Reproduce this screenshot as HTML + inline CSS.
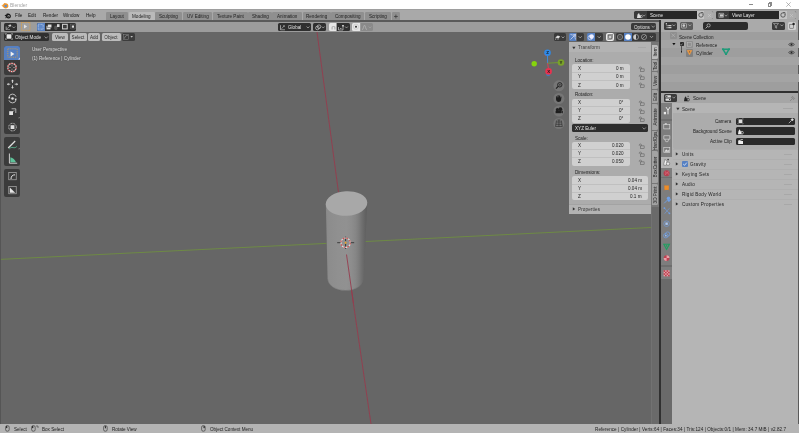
<!DOCTYPE html>
<html><head><meta charset="utf-8">
<style>
*{margin:0;padding:0;box-sizing:border-box}
html,body{width:799px;height:433px;overflow:hidden;background:#666}
body{position:relative;font-family:"Liberation Sans",sans-serif;font-size:4.6px;line-height:1;color:#1a1a1a}
.a{position:absolute}
.t{position:absolute;white-space:nowrap;line-height:1;will-change:transform}
.dk{background:#2f2f2f;border-radius:1.5px}
.lt{background:#bcbcbc;border-radius:1.5px}
</style></head><body>
<!-- title bar -->
<div class="a" style="left:0;top:0;width:799px;height:9.3px;background:#fff"></div>
<div class="a" style="left:0;top:9.3px;width:799px;height:10.7px;background:#a9a9a9"></div>
<div class="a" style="left:0;top:9.3px;width:799px;height:1px;background:#9e9e9e"></div>
<div class="a" style="left:0;top:20px;width:799px;height:1.5px;background:#5a5a5a"></div>
<div class="a" style="left:0;top:21.5px;width:659px;height:10px;background:#9c9c9c"></div>
<!-- viewport -->
<div class="a" style="left:0;top:31.5px;width:659px;height:392px;background:#666"></div>
<!-- vertical separator -->
<div class="a" style="left:659px;top:20px;width:2px;height:404px;background:#303030"></div>
<!-- outliner -->
<div class="a" style="left:661px;top:20px;width:138px;height:11.5px;background:#aaaaaa"></div>
<div class="a" style="left:661px;top:31.5px;width:138px;height:59.5px;background:#9e9e9e"></div>
<div class="a" style="left:661px;top:91px;width:138px;height:2px;background:#303030"></div>
<!-- properties -->
<div class="a" style="left:661px;top:93px;width:138px;height:10.3px;background:#a6a6a6"></div>
<div class="a" style="left:661px;top:103.3px;width:11px;height:320.7px;background:#6a6a6a"></div>
<div class="a" style="left:672px;top:103.3px;width:127px;height:320.7px;background:#b5b5b5"></div>
<!-- status bar -->
<div class="a" style="left:0;top:423.5px;width:799px;height:1px;background:#505050"></div>
<div class="a" style="left:0;top:424px;width:799px;height:9px;background:#b4b4b4"></div>

<!-- TITLE BAR CONTENT -->
<svg class="a" style="left:1px;top:1.6px" width="8" height="7" viewBox="0 0 8 7">
<path d="M0.4 3.6 L2.6 3 L1.4 2.2 L3.2 2 L2.6 0.9 L4.6 1.2 C6.4 1.2 7.4 2.6 7.4 3.9 C7.4 5.4 6.2 6.4 4.6 6.4 C3.4 6.4 2.6 5.8 2.2 5 Z" fill="#f0962c"/>
<circle cx="4.7" cy="3.9" r="1.25" fill="#5c8fd0"/>
</svg>
<div class="t" style="left:9.8px;top:3.2px;font-size:5px;color:#a4a4a4">Blender</div>
<div class="a" style="left:748.6px;top:4.2px;width:4.5px;height:0.6px;background:#8a8a8a"></div>
<div class="a" style="left:767.5px;top:3px;width:3.6px;height:3.6px;border:0.6px solid #8a8a8a"></div>
<div class="a" style="left:768.5px;top:2.2px;width:3.6px;height:3.6px;border-top:0.6px solid #8a8a8a;border-right:0.6px solid #8a8a8a"></div>
<svg class="a" style="left:786px;top:2px" width="5" height="5" viewBox="0 0 5 5"><path d="M0.3 0.3L4.7 4.7M4.7 0.3L0.3 4.7" stroke="#8a8a8a" stroke-width="0.6"/></svg>

<!-- MENU BAR -->
<svg class="a" style="left:3.5px;top:12.5px" width="8" height="6" viewBox="0 0 8 6">
<path d="M0.5 2.4 L3 1 L2.4 0.5 L4.4 0.4 C6.4 0.6 7.6 2.6 6.6 4.4 C5.6 5.8 3.4 5.8 2.6 4.6 L1.2 5.4 L2 3.6 Z" fill="#1a1a1a"/>
<circle cx="4.6" cy="3.2" r="1.1" fill="#a9a9a9"/>
<circle cx="4.6" cy="3.2" r="0.55" fill="#1a1a1a"/>
</svg>
<div class="t" style="left:14.8px;top:13.9px">File</div>
<div class="t" style="left:28.2px;top:13.9px">Edit</div>
<div class="t" style="left:42.5px;top:13.9px">Render</div>
<div class="t" style="left:63.2px;top:13.9px">Window</div>
<div class="t" style="left:86px;top:13.9px">Help</div>

<!-- WORKSPACE TABS -->
<div class="a" style="left:106px;top:11.6px;width:22.2px;height:8.4px;background:#8f8f8f;border-radius:1.2px 1.2px 0 0;display:flex;align-items:center;justify-content:center"><span style="position:relative;top:2px;white-space:nowrap;will-change:transform;color:#222">Layout</span></div>
<div class="a" style="left:128.6px;top:11.6px;width:26.2px;height:8.4px;background:#bababa;border-radius:1.2px 1.2px 0 0;display:flex;align-items:center;justify-content:center"><span style="position:relative;top:2px;white-space:nowrap;will-change:transform;color:#222">Modeling</span></div>
<div class="a" style="left:155.4px;top:11.6px;width:26.4px;height:8.4px;background:#8f8f8f;border-radius:1.2px 1.2px 0 0;display:flex;align-items:center;justify-content:center"><span style="position:relative;top:2px;white-space:nowrap;will-change:transform;color:#222">Sculpting</span></div>
<div class="a" style="left:182.6px;top:11.6px;width:29.7px;height:8.4px;background:#8f8f8f;border-radius:1.2px 1.2px 0 0;display:flex;align-items:center;justify-content:center"><span style="position:relative;top:2px;white-space:nowrap;will-change:transform;color:#222">UV Editing</span></div>
<div class="a" style="left:213px;top:11.6px;width:34.6px;height:8.4px;background:#8f8f8f;border-radius:1.2px 1.2px 0 0;display:flex;align-items:center;justify-content:center"><span style="position:relative;top:2px;white-space:nowrap;will-change:transform;color:#222">Texture Paint</span></div>
<div class="a" style="left:248.4px;top:11.6px;width:23.2px;height:8.4px;background:#8f8f8f;border-radius:1.2px 1.2px 0 0;display:flex;align-items:center;justify-content:center"><span style="position:relative;top:2px;white-space:nowrap;will-change:transform;color:#222">Shading</span></div>
<div class="a" style="left:272.4px;top:11.6px;width:29.8px;height:8.4px;background:#8f8f8f;border-radius:1.2px 1.2px 0 0;display:flex;align-items:center;justify-content:center"><span style="position:relative;top:2px;white-space:nowrap;will-change:transform;color:#222">Animation</span></div>
<div class="a" style="left:303px;top:11.6px;width:27.6px;height:8.4px;background:#8f8f8f;border-radius:1.2px 1.2px 0 0;display:flex;align-items:center;justify-content:center"><span style="position:relative;top:2px;white-space:nowrap;will-change:transform;color:#222">Rendering</span></div>
<div class="a" style="left:331.4px;top:11.6px;width:32.9px;height:8.4px;background:#8f8f8f;border-radius:1.2px 1.2px 0 0;display:flex;align-items:center;justify-content:center"><span style="position:relative;top:2px;white-space:nowrap;will-change:transform;color:#222">Compositing</span></div>
<div class="a" style="left:365.1px;top:11.6px;width:26.3px;height:8.4px;background:#8f8f8f;border-radius:1.2px 1.2px 0 0;display:flex;align-items:center;justify-content:center"><span style="position:relative;top:2px;white-space:nowrap;will-change:transform;color:#222">Scripting</span></div>
<div class="a" style="left:392px;top:11.6px;width:7.6px;height:8.4px;background:#8f8f8f;border-radius:1.2px 1.2px 0 0"></div>
<svg class="a" style="left:392px;top:11.6px" width="8" height="8.4" viewBox="0 0 8 8.4"><path d="M3.9 2.6 V6.4 M2 4.5 H5.8" stroke="#333" stroke-width="0.7"/></svg>

<!-- SCENE / VIEW LAYER -->
<div class="a dk" style="left:634px;top:11.2px;width:79.4px;height:7.5px;background:#3a3a3a"></div>
<div class="a" style="left:647px;top:11.2px;width:49.5px;height:7.5px;background:#272727"></div>
<div class="a" style="left:696.5px;top:11.2px;width:8px;height:7.5px;background:#c4c4c4"></div>
<div class="a" style="left:704.4px;top:11.2px;width:9px;height:7.5px;background:#adadad;border-radius:0 1.5px 1.5px 0"></div>
<svg class="a" style="left:636px;top:11.8px" width="10" height="6.5" viewBox="0 0 10 6.5"><path d="M1 6 L1.5 2.5 L3 1 L3.8 3 L5 4.5 L4.5 6 Z" fill="#ddd"/><circle cx="5" cy="4.6" r="1.3" fill="none" stroke="#ddd" stroke-width="0.6"/><path d="M6.60 2.70 L8.00 4.20 L9.40 2.70" stroke="#ccc" stroke-width="0.6" fill="none"/></svg>
<div class="t" style="left:650px;top:14.2px;color:#e6e6e6">Scene</div>
<svg class="a" style="left:697.5px;top:12px" width="6" height="6" viewBox="0 0 6 6"><circle cx="3" cy="3" r="2.2" fill="none" stroke="#333" stroke-width="0.7"/><path d="M3 0.5 L5 0.5 L5 2.5" fill="#c4c4c4" stroke="#333" stroke-width="0.6"/></svg>
<svg class="a" style="left:706.5px;top:12.5px" width="5" height="5" viewBox="0 0 5 5"><path d="M1 1L4 4M4 1L1 4" stroke="#c8c8c8" stroke-width="0.6"/></svg>

<div class="a dk" style="left:716px;top:11.2px;width:79.7px;height:7.5px;background:#3a3a3a"></div>
<div class="a" style="left:729px;top:11.2px;width:49.5px;height:7.5px;background:#272727"></div>
<div class="a" style="left:778.5px;top:11.2px;width:8.3px;height:7.5px;background:#c4c4c4"></div>
<div class="a" style="left:786.8px;top:11.2px;width:8.9px;height:7.5px;background:#adadad;border-radius:0 1.5px 1.5px 0"></div>
<svg class="a" style="left:718px;top:11.8px" width="10" height="6.5" viewBox="0 0 10 6.5"><rect x="1" y="1.2" width="4.5" height="4" fill="none" stroke="#ccc" stroke-width="0.6"/><rect x="2" y="2.3" width="3" height="2.3" fill="#ccc"/><path d="M6.60 2.70 L8.00 4.20 L9.40 2.70" stroke="#ccc" stroke-width="0.6" fill="none"/></svg>
<div class="t" style="left:732px;top:14.2px;color:#e6e6e6">View Layer</div>
<svg class="a" style="left:779.6px;top:12px" width="6" height="6" viewBox="0 0 6 6"><circle cx="3" cy="3" r="2.2" fill="none" stroke="#333" stroke-width="0.7"/><path d="M3 0.5 L5 0.5 L5 2.5" fill="#c4c4c4" stroke="#333" stroke-width="0.6"/></svg>
<svg class="a" style="left:788.8px;top:12.5px" width="5" height="5" viewBox="0 0 5 5"><path d="M1 1L4 4M4 1L1 4" stroke="#c8c8c8" stroke-width="0.6"/></svg>

<!-- TOOL HEADER -->
<div class="a dk" style="left:4px;top:23px;width:12.5px;height:7.5px"></div>
<svg class="a" style="left:5px;top:23.5px" width="11" height="6.5" viewBox="0 0 11 6.5"><path d="M1.2 5.8 V2.5 M1.2 5.8 H5 M2 4.8 L4.8 2 M3.5 1.5 L5.5 0.8 L6 2.2 Z" stroke="#ddd" stroke-width="0.6" fill="#ddd"/><path d="M7.40 2.50 L8.80 4.00 L10.20 2.50" stroke="#ccc" stroke-width="0.6" fill="none"/></svg>
<svg class="a" style="left:21px;top:22.2px" width="9.5" height="8.8" viewBox="0 0 9.5 8.8"><rect x="0.5" y="0.5" width="8.5" height="7.8" fill="#a0a0a0" stroke="#f0a028" stroke-width="0.7" stroke-dasharray="0.9 0.7"/></svg>
<svg class="a" style="left:23.2px;top:24.3px" width="5" height="5" viewBox="0 0 5 5"><path d="M1 0.5 L4.2 2.6 L1 4.6 Z" fill="#e0e0e0"/></svg>
<div class="a dk" style="left:37px;top:23px;width:39px;height:7.5px"></div>
<div class="a" style="left:37px;top:23px;width:7.5px;height:7.5px;background:#5680c2;border-radius:1.5px 0 0 1.5px"></div>
<svg class="a" style="left:37px;top:23px" width="7.5" height="7.5" viewBox="0 0 7.5 7.5"><rect x="1.3" y="1.3" width="4.9" height="4.9" fill="#5f88c8" stroke="#e6eefa" stroke-width="0.6" stroke-dasharray="0.8 0.6"/></svg>
<svg class="a" style="left:44.5px;top:23px" width="32" height="7.5" viewBox="0 0 32 7.5">
<rect x="1.5" y="2.8" width="4" height="3.6" fill="#ddd"/><rect x="2.8" y="1.2" width="4" height="3.6" fill="#ddd" stroke="#2f2f2f" stroke-width="0.4"/>
<path d="M9.5 6.3 V2.5 H12 V1.2 H14.5 V4 H12 V6.3 Z" fill="#444"/><rect x="12" y="1.2" width="2.5" height="2.8" fill="#ddd"/><rect x="9.8" y="3.8" width="2.2" height="2.5" fill="none" stroke="#ddd" stroke-width="0.4" stroke-dasharray="0.5 0.5"/>
<rect x="17.6" y="1.3" width="4.6" height="4.6" fill="none" stroke="#ddd" stroke-width="1"/><rect x="18.9" y="2.6" width="2" height="2" fill="#444"/>
<rect x="25.6" y="1.3" width="4.6" height="4.6" fill="none" stroke="#ddd" stroke-width="0.4" stroke-dasharray="0.5 0.5"/><rect x="26.8" y="2.5" width="2.2" height="2.2" fill="#ddd"/>
</svg>

<!-- GLOBAL / PIVOT / SNAP -->
<div class="a dk" style="left:278px;top:23.2px;width:32.6px;height:7.5px"></div>
<svg class="a" style="left:279px;top:23.6px" width="32" height="7" viewBox="0 0 32 7"><path d="M1.5 1.2 V5.8 H6" stroke="#ddd" stroke-width="0.6" fill="none"/><path d="M2.4 4.8 L4.8 2.4" stroke="#ddd" stroke-width="0.5"/><circle cx="5" cy="2" r="0.7" fill="#ddd"/><path d="M27.60 2.50 L29.00 4.00 L30.40 2.50" stroke="#ccc" stroke-width="0.6" fill="none"/></svg>
<div class="t" style="left:288px;top:26.3px;color:#e0e0e0;font-size:4.6px">Global</div>
<div class="a dk" style="left:313.4px;top:23.2px;width:12.4px;height:7.5px"></div>
<svg class="a" style="left:314px;top:23.6px" width="12" height="7" viewBox="0 0 12 7"><circle cx="3.4" cy="4" r="1.8" fill="none" stroke="#ddd" stroke-width="0.6"/><circle cx="5" cy="2.7" r="1.8" fill="none" stroke="#ddd" stroke-width="0.6"/><path d="M7.80 2.50 L9.20 4.00 L10.60 2.50" stroke="#ccc" stroke-width="0.6" fill="none"/></svg>
<div class="a" style="left:329px;top:23.2px;width:7.4px;height:7.5px;background:#e6e6e6;border-radius:1.5px 0 0 1.5px"></div>
<svg class="a" style="left:329.5px;top:23.6px" width="7" height="7" viewBox="0 0 7 7"><path d="M1.5 3.5 C1.5 1.5 5.5 1.5 5.5 3.5 L5.5 5.5 L4.3 5.5 L4.3 3.5 C4.3 2.6 2.7 2.6 2.7 3.5 L2.7 5.5 L1.5 5.5 Z" fill="#b0b0b0"/></svg>
<div class="a dk" style="left:336.6px;top:23.2px;width:13px;height:7.5px;border-radius:0 1.5px 1.5px 0"></div>
<svg class="a" style="left:337px;top:23.6px" width="13" height="7" viewBox="0 0 13 7"><path d="M1.5 3 V6 M1.5 6 H6 M6 3 V6 M3 4.5 H4.5" stroke="#ddd" stroke-width="0.6" fill="none"/><circle cx="6" cy="1.8" r="0.9" fill="#fff"/><path d="M8.10 2.50 L9.50 4.00 L10.90 2.50" stroke="#ccc" stroke-width="0.6" fill="none"/></svg>
<div class="a" style="left:352.4px;top:23.2px;width:7.8px;height:7.5px;background:#e6e6e6;border-radius:1.5px 0 0 1.5px"></div>
<svg class="a" style="left:352.4px;top:23.2px" width="8" height="7.5" viewBox="0 0 8 7.5"><circle cx="4" cy="3.75" r="2.6" fill="none" stroke="#bbb" stroke-width="0.5"/><circle cx="4" cy="3.75" r="1" fill="#333"/></svg>
<div class="a" style="left:360.5px;top:23.2px;width:12.8px;height:7.5px;background:#8a8a8a;border-radius:0 1.5px 1.5px 0"></div>
<svg class="a" style="left:361px;top:23.6px" width="12" height="7" viewBox="0 0 12 7"><path d="M1 5.8 C2.5 5.8 2.5 1.2 3.5 1.2 C4.5 1.2 4.5 5.8 6 5.8" stroke="#c0c0c0" stroke-width="0.6" fill="none"/><path d="M7.60 2.50 L9.00 4.00 L10.40 2.50" stroke="#aaa" stroke-width="0.6" fill="none"/></svg>

<!-- OPTIONS -->
<div class="a dk" style="left:631px;top:23.3px;width:25px;height:6.9px;background:#3a3a3a"></div>
<div class="t" style="left:633.5px;top:26.3px;color:#e0e0e0">Options</div>
<svg class="a" style="left:651px;top:24.3px" width="5" height="5" viewBox="0 0 5 5"><path d="M0.60 1.70 L2.20 3.40 L3.80 1.70" stroke="#ccc" stroke-width="0.6" fill="none"/></svg>

<!-- VIEWPORT HEADER -->
<div class="a dk" style="left:4px;top:33px;width:45px;height:7.8px"></div>
<svg class="a" style="left:5px;top:33.4px" width="8" height="7" viewBox="0 0 8 7"><rect x="1.6" y="1.3" width="4.8" height="4.4" fill="#e8e8e8"/><path d="M0.5 0.5 H1.8 M0.5 0.5 V1.8 M7.5 0.5 H6.2 M7.5 0.5 V1.8 M0.5 6.5 H1.8 M0.5 6.5 V5.2 M7.5 6.5 H6.2 M7.5 6.5 V5.2" stroke="#ccc" stroke-width="0.5"/></svg>
<div class="t" style="left:14.5px;top:36px;color:#e6e6e6">Object Mode</div>
<svg class="a" style="left:44px;top:35px" width="5" height="5" viewBox="0 0 5 5"><path d="M0.60 1.50 L2.20 3.20 L3.80 1.50" stroke="#ccc" stroke-width="0.6" fill="none"/></svg>
<div class="a lt" style="left:52px;top:33.2px;width:16px;height:7.4px"></div>
<div class="t" style="left:60.00px;top:36px;color:#2a2a2a;transform:translateX(-50%)">View</div>
<div class="a lt" style="left:69.5px;top:33.2px;width:17.2px;height:7.4px"></div>
<div class="t" style="left:78.10px;top:36px;color:#2a2a2a;transform:translateX(-50%)">Select</div>
<div class="a lt" style="left:87.5px;top:33.2px;width:12.7px;height:7.4px"></div>
<div class="t" style="left:93.85px;top:36px;color:#2a2a2a;transform:translateX(-50%)">Add</div>
<div class="a lt" style="left:101.5px;top:33.2px;width:19px;height:7.4px"></div>
<div class="t" style="left:111.00px;top:36px;color:#2a2a2a;transform:translateX(-50%)">Object</div>
<div class="a dk" style="left:121.6px;top:33px;width:13.2px;height:8.2px;background:#3c3c3c"></div>
<svg class="a" style="left:122px;top:33.3px" width="13" height="8" viewBox="0 0 13 8"><rect x="1.6" y="1.4" width="5" height="5" fill="none" stroke="#8a8a8a" stroke-width="0.5"/><path d="M2.6 5.6 C2.6 3.6 3.8 2.4 5.8 2.4" stroke="#aaa" stroke-width="0.6" fill="none"/><path d="M8.4 3.2 H11 L9.7 4.6 Z" fill="#eee"/></svg>

<div class="a dk" style="left:553.7px;top:33px;width:12.3px;height:8px;background:#3a3a3a"></div>
<svg class="a" style="left:554px;top:33.5px" width="12" height="7" viewBox="0 0 12 7"><path d="M1.2 3.4 L3.8 1.4 L6.2 2.4 L4.5 4.4 Z" fill="#ddd"/><path d="M2 4 L1.5 6 M4 4.5 L4 6" stroke="#ddd" stroke-width="0.5"/><path d="M7.60 2.50 L9.00 4.00 L10.40 2.50" stroke="#ccc" stroke-width="0.6" fill="none"/></svg>
<div class="a" style="left:568.7px;top:33px;width:7.8px;height:8px;background:#5680c2;border-radius:1.5px 0 0 1.5px"></div>
<svg class="a" style="left:568.7px;top:33px" width="8" height="8" viewBox="0 0 8 8"><path d="M1.5 6.5 L6.5 1.5 M1.5 1.5 C4 1.5 6.5 4 6.5 6.5 M4.2 1.5 H6.5 V3.8" stroke="#eef" stroke-width="0.6" fill="none"/></svg>
<div class="a dk" style="left:576.5px;top:33px;width:7.8px;height:8px;border-radius:0 1.5px 1.5px 0;background:#3a3a3a"></div>
<svg class="a" style="left:577px;top:33px" width="7" height="8" viewBox="0 0 7 8"><path d="M1.60 3.20 L3.20 4.90 L4.80 3.20" stroke="#ccc" stroke-width="0.6" fill="none"/></svg>
<div class="a" style="left:587.3px;top:33px;width:8px;height:8px;background:#5680c2;border-radius:1.5px 0 0 1.5px"></div>
<svg class="a" style="left:587.3px;top:33px" width="8" height="8" viewBox="0 0 8 8"><circle cx="4.6" cy="3.6" r="2.3" fill="#eef"/><circle cx="3.2" cy="4.6" r="2.2" fill="none" stroke="#eef" stroke-width="0.6"/></svg>
<div class="a dk" style="left:595.3px;top:33px;width:7.5px;height:8px;border-radius:0 1.5px 1.5px 0;background:#3a3a3a"></div>
<svg class="a" style="left:595.5px;top:33px" width="7" height="8" viewBox="0 0 7 8"><path d="M1.60 3.20 L3.20 4.90 L4.80 3.20" stroke="#ccc" stroke-width="0.6" fill="none"/></svg>
<div class="a" style="left:605.8px;top:33px;width:8.2px;height:8px;background:#cfcfcf;border:0.6px solid #eee;border-radius:1.5px"></div>
<svg class="a" style="left:605.8px;top:33px" width="8" height="8" viewBox="0 0 8 8"><rect x="2" y="2.4" width="3.6" height="3.8" fill="none" stroke="#555" stroke-width="0.5"/><rect x="2.8" y="1.6" width="3.6" height="3.8" fill="none" stroke="#555" stroke-width="0.5"/></svg>
<div class="a dk" style="left:616.3px;top:33px;width:39.7px;height:8px;background:#3a3a3a"></div>
<div class="a" style="left:624.3px;top:33px;width:8px;height:8px;background:#5680c2"></div>
<svg class="a" style="left:616.3px;top:33px" width="40" height="8" viewBox="0 0 40 8">
<circle cx="4" cy="4" r="2.6" fill="none" stroke="#ccc" stroke-width="0.5"/><path d="M1.4 4 H6.6 M4 1.4 V6.6" stroke="#999" stroke-width="0.3"/>
<circle cx="12" cy="4" r="2.8" fill="#fff"/>
<circle cx="20" cy="4" r="2.6" fill="none" stroke="#ccc" stroke-width="0.5"/><path d="M20 1.4 A2.6 2.6 0 0 0 20 6.6 Z" fill="#ccc"/>
<circle cx="28" cy="4" r="2.6" fill="none" stroke="#ccc" stroke-width="0.5"/><path d="M26.2 5.8 L29.8 2.2" stroke="#ccc" stroke-width="0.5"/>
<path d="M33.90 3.00 L35.50 4.70 L37.10 3.00" stroke="#ccc" stroke-width="0.6" fill="none"/>
</svg>

<!-- VIEWPORT SCENE -->
<svg class="a" style="left:0;top:31.5px" width="659" height="392" viewBox="0 31.5 659 392">
<line x1="0" y1="258.9" x2="326.5" y2="242.9" stroke="#6e8a45" stroke-width="1"/>
<line x1="365.5" y1="241" x2="651" y2="227" stroke="#6e8a45" stroke-width="1"/>
<line x1="317" y1="31.5" x2="338.5" y2="192" stroke="#963c4e" stroke-width="0.9"/>
<defs>
<linearGradient id="cyl" x1="325.8" x2="367.2" y1="0" y2="0" gradientUnits="userSpaceOnUse">
<stop offset="0" stop-color="#878787"/>
<stop offset="0.05" stop-color="#8c8c8c"/>
<stop offset="0.3" stop-color="#909090"/>
<stop offset="0.5" stop-color="#919191"/>
<stop offset="0.62" stop-color="#8d8d8d"/>
<stop offset="0.72" stop-color="#868686"/>
<stop offset="0.8" stop-color="#7c7c7c"/>
<stop offset="0.86" stop-color="#717171"/>
<stop offset="0.92" stop-color="#686868"/>
<stop offset="0.97" stop-color="#606060"/>
<stop offset="1" stop-color="#5e5e5e"/>
</linearGradient>
</defs>
<path d="M325.8 203 L327.6 278.5 A18 11.5 0 0 0 363.6 278.5 L367.2 203 Z" fill="url(#cyl)"/>
<path d="M327.6 278.5 A18 11.5 0 0 0 363.6 278.5" fill="none" stroke="#6a6a6a" stroke-width="0.6" opacity="0.6"/>
<ellipse cx="346.5" cy="203" rx="20.8" ry="12.3" fill="#a8a8a8" transform="rotate(-3 346.5 203)"/>
<line x1="346.5" y1="254" x2="353.5" y2="303" stroke="#963c4e" stroke-width="0.9"/>
<line x1="351.5" y1="290" x2="371" y2="423.5" stroke="#963c4e" stroke-width="0.9"/>
<!-- 3D cursor -->
<path d="M345.6 236.2 V240.6 M345.6 243.4 V248.4" stroke="#2a2a2a" stroke-width="0.9"/>
<circle cx="345.6" cy="242.2" r="4.7" fill="none" stroke="#e2e2e2" stroke-width="1.1"/>
<circle cx="345.6" cy="242.2" r="4.7" fill="none" stroke="#cf4a4a" stroke-width="1.1" stroke-dasharray="1.85 1.85"/>
<path d="M337.2 242.2 H340.6 M350.6 242.2 H354.2" stroke="#2a2a2a" stroke-width="0.8"/>
<circle cx="345.6" cy="242.2" r="1" fill="#f0a020"/>
</svg>

<!-- OVERLAY TEXT -->
<div class="t" style="left:31.8px;top:48px;color:#e2e2e2;text-shadow:0 0 1px #333">User Perspective</div>
<div class="t" style="left:31.8px;top:56.5px;color:#e2e2e2;text-shadow:0 0 1px #333">(1) Reference | Cylinder</div>

<!-- TOOLBAR -->
<div class="a" style="left:3.7px;top:46px;width:16.6px;height:28.6px;background:#3b3b3b;border-radius:2px"></div>
<div class="a" style="left:3.7px;top:46px;width:16.6px;height:14px;background:#5680c2;border-radius:2px 2px 0 0"></div>
<svg class="a" style="left:6.5px;top:48px" width="11" height="10" viewBox="0 0 11 10"><rect x="0.8" y="0.8" width="9.4" height="8.4" fill="none" stroke="#e8a030" stroke-width="0.7" stroke-dasharray="1 0.9"/></svg>
<svg class="a" style="left:9.5px;top:50.5px" width="5" height="6" viewBox="0 0 5 6"><path d="M0.6 0.4 L4.4 3 L0.6 5.6 Z" fill="#f0f0f0"/></svg>
<svg class="a" style="left:17.5px;top:57px" width="2.5" height="2.5" viewBox="0 0 2.5 2.5"><path d="M0 2.5 L2.5 2.5 L2.5 0 Z" fill="#d0d8ef"/></svg>
<svg class="a" style="left:5px;top:61px" width="14" height="13" viewBox="0 0 14 13"><circle cx="7" cy="6.5" r="4.2" fill="none" stroke="#ddd" stroke-width="1.2"/><circle cx="7" cy="6.5" r="4.2" fill="none" stroke="#b73535" stroke-width="1.2" stroke-dasharray="1.2 1.3"/><path d="M7 3.6 V5.4 M7 7.6 V9.4 M4.1 6.5 H5.9 M8.1 6.5 H9.9" stroke="#ccc" stroke-width="0.5"/></svg>

<div class="a" style="left:3.7px;top:77.3px;width:16.6px;height:56.6px;background:#3b3b3b;border-radius:2px"></div>
<svg class="a" style="left:3.7px;top:77.3px" width="17" height="57" viewBox="0 0 17 57">
<g stroke="#e0e0e0" stroke-width="0.8" fill="#e0e0e0">
<path d="M8.5 3.6 V6 M8.5 8.4 V10.8 M3.9 7.2 H6.3 M10.7 7.2 H13.1" fill="none"/>
<path d="M8.5 2.6 L7.1 4.2 H9.9 Z M8.5 11.8 L7.1 10.2 H9.9 Z M2.9 7.2 L4.5 5.8 V8.6 Z M14.1 7.2 L12.5 5.8 V8.6 Z" stroke="none"/>
<path d="M5 19.6 A3.7 3.7 0 0 1 12 19.6 M12 23.4 A3.7 3.7 0 0 1 5 23.4" fill="none"/>
<circle cx="8.5" cy="21.5" r="1.3" stroke="none"/>
<path d="M4 21.2 L5.6 19 L6.4 21.6 Z M13 21.8 L11.4 24 L10.6 21.4 Z" stroke="none"/>
<rect x="5.2" y="34.2" width="3.8" height="3.8" stroke="none"/>
<path d="M7.6 31.8 H11.8 V36" fill="none" stroke-width="0.7"/>
<path d="M10.2 33.4 L8.6 35" fill="none" stroke-width="0.6"/>
<path d="M14.4 41 L15.4 41 L15.4 40" stroke="#aaa" stroke-width="0.5" fill="none"/>
<circle cx="8.5" cy="50.1" r="3.8" fill="none" stroke-dasharray="1 0.6"/>
<rect x="6.6" y="48.2" width="3.8" height="3.8" stroke="none"/>
</g>
</svg>

<div class="a" style="left:3.7px;top:137.3px;width:16.6px;height:29px;background:#3b3b3b;border-radius:2px"></div>
<svg class="a" style="left:3.7px;top:137.3px" width="17" height="29" viewBox="0 0 17 29">
<path d="M4.2 11 L11.2 4" stroke="#e0e0e0" stroke-width="1.2"/>
<path d="M5.2 12 C8 8.5 10 12.5 12.8 9.5" stroke="#5ec39a" stroke-width="0.8" fill="none"/>
<path d="M14.4 12 L15.4 12 L15.4 11" stroke="#aaa" stroke-width="0.5" fill="none"/>
<path d="M5.4 16.5 V26.2 H13.2" stroke="#e0e0e0" stroke-width="0.9" fill="none"/>
<path d="M6.4 25.2 V20.2 C9 20.7 11 22.7 12 25.2 Z" fill="#5ec39a"/>
</svg>

<div class="a" style="left:3.7px;top:168.8px;width:16.6px;height:28.2px;background:#3b3b3b;border-radius:2px"></div>
<svg class="a" style="left:3.7px;top:168.8px" width="17" height="29" viewBox="0 0 17 29">
<rect x="4.8" y="3.4" width="7.4" height="7.4" fill="none" stroke="#bfbfbf" stroke-width="0.6"/>
<path d="M7 10 C7 7.2 8.6 5.8 11 5.8" stroke="#e6e6e6" stroke-width="1" fill="none"/>
<rect x="4.8" y="17.4" width="7.4" height="7.4" fill="none" stroke="#bfbfbf" stroke-width="0.6"/>
<path d="M5.8 18.4 L11.2 23.8 L5.8 23.8 Z" fill="#e6e6e6"/>
</svg>

<!-- NAV GIZMO -->
<svg class="a" style="left:525px;top:40px" width="45" height="40" viewBox="525 40 45 40">
<circle cx="546" cy="54.5" r="1.6" fill="#c04050" opacity="0.8"/>
<circle cx="548.2" cy="74.3" r="2" fill="#3a7fd0" opacity="0.8"/>
<line x1="547.6" y1="63.2" x2="547.5" y2="55" stroke="#3d8fe6" stroke-width="0.9"/>
<line x1="547.6" y1="63.2" x2="558" y2="62.6" stroke="#74a02c" stroke-width="0.9"/>
<line x1="547.6" y1="63.2" x2="548.5" y2="69" stroke="#e0405a" stroke-width="0.9"/>
<circle cx="534.2" cy="63.8" r="2.7" fill="#86d40c"/>
<circle cx="547.5" cy="52.7" r="3.3" fill="#2f8ae8"/>
<circle cx="561" cy="62.5" r="3.3" fill="#7aa229"/>
<circle cx="548.6" cy="71.4" r="3.3" fill="#e8324f"/>
<text x="547.5" y="54.4" font-size="4.4" text-anchor="middle" fill="#1a1a1a" font-family="Liberation Sans" font-weight="bold">Z</text>
<text x="561" y="64.2" font-size="4.4" text-anchor="middle" fill="#1a1a1a" font-family="Liberation Sans" font-weight="bold">Y</text>
<text x="548.6" y="73.1" font-size="4.4" text-anchor="middle" fill="#1a1a1a" font-family="Liberation Sans" font-weight="bold">X</text>
</svg>
<!-- NAV BUTTONS -->
<svg class="a" style="left:552px;top:79px" width="14" height="52" viewBox="552 79 14 52">
<circle cx="558.9" cy="85.8" r="5.5" fill="#767676"/>
<circle cx="558.9" cy="98.5" r="5.5" fill="#767676"/>
<circle cx="558.9" cy="111" r="5.5" fill="#767676"/>
<circle cx="558.9" cy="123.5" r="5.5" fill="#767676"/>
<circle cx="559.8" cy="84.8" r="2.2" fill="none" stroke="#1e1e1e" stroke-width="0.9"/>
<path d="M558.2 86.4 L556 88.6" stroke="#1e1e1e" stroke-width="1.1"/>
<path d="M558.8 84.8 H560.8 M559.8 83.8 V85.8" stroke="#1e1e1e" stroke-width="0.5"/>
<path d="M556 99 C556 97 556.4 95.8 557 96.2 L557.4 98 L557.6 95.4 C558 95 558.4 95 558.6 95.4 L558.8 97.8 L559.2 95.6 C559.6 95.2 560 95.4 560.1 95.8 L560.2 98 L560.8 96.6 C561.3 96.4 561.6 96.8 561.5 97.2 L561 100.6 C560.6 101.6 559.8 102 558.8 102 C557.2 102 556 100.8 556 99 Z" fill="#1e1e1e"/>
<circle cx="557.4" cy="109.7" r="1.6" fill="#1e1e1e"/><circle cx="560.4" cy="109.2" r="1.9" fill="#1e1e1e"/>
<rect x="555.6" y="110.8" width="5.6" height="2.4" fill="#1e1e1e"/><path d="M561.2 111.4 L562.8 110.6 V113.4 L561.2 112.6 Z" fill="#1e1e1e"/>
<path d="M555.5 126.5 H562.3 M555.8 124.3 H562 M556.5 122 H561.3 M557.5 120 H560.3" stroke="#1e1e1e" stroke-width="0.5"/>
<path d="M556.5 120.5 L555.5 126.5 M561.3 120.5 L562.3 126.5 M558.9 120 V126.5" stroke="#1e1e1e" stroke-width="0.5"/>
</svg>


<!-- EDGES -->
<div class="a" style="left:0;top:21.5px;width:1px;height:402px;background:#555"></div>
<div class="a" style="left:798px;top:20px;width:1px;height:404px;background:#5a5a5a"></div>
<div class="a" style="left:651px;top:207px;width:8px;height:216.5px;background:#6a6a6a;border-left:0.5px solid #727272"></div>
<!-- N PANEL -->
<div class="a" style="left:568.5px;top:42px;width:82.5px;height:172px;background:#acacac"></div>
<div class="a" style="left:568.5px;top:42px;width:82.5px;height:10.3px;background:#b3b3b3"></div>
<svg class="a" style="left:571.5px;top:45.5px" width="4" height="4" viewBox="0 0 4 4"><path d="M0.3 0.8 H3.5 L1.9 3.2 Z" fill="#333"/></svg>
<div class="t" style="left:577.7px;top:46px;color:#3a3a3a;letter-spacing:0.12px">Transform</div>
<div class="a" style="left:638px;top:47.2px;width:8px;height:0.5px;background:#a8a8a8"></div>
<div class="t" style="left:575px;top:58.5px;color:#222">Location:</div>
<div class="a" style="left:572px;top:64.2px;width:57.8px;height:25.0px;background:#d0d0d0;border-radius:2px;overflow:hidden"><div class="a" style="left:0;top:7.93px;width:100%;height:0.6px;background:#c0c0c0"></div><div class="a" style="left:0;top:16.27px;width:100%;height:0.6px;background:#c0c0c0"></div></div>
<div class="t" style="left:577.5px;top:66.9px;color:#222">X</div><div class="t" style="right:175.2px;top:66.9px;color:#222">0 m</div>
<div class="t" style="left:577.5px;top:75.2px;color:#222">Y</div><div class="t" style="right:175.2px;top:75.2px;color:#222">0 m</div>
<div class="t" style="left:577.5px;top:83.5px;color:#222">Z</div><div class="t" style="right:175.2px;top:83.5px;color:#222">0 m</div>
<svg class="a" style="left:637.5px;top:65.6px" width="7" height="6" viewBox="0 0 7 6"><path d="M1.3 2.8 V1.9 C1.3 0.7 3.5 0.7 3.5 1.9 V2.8" stroke="#4a4a4a" stroke-width="0.45" fill="none"/><rect x="2.5" y="2.9" width="3.6" height="2.5" fill="none" stroke="#4a4a4a" stroke-width="0.45"/></svg>
<svg class="a" style="left:637.5px;top:73.8px" width="7" height="6" viewBox="0 0 7 6"><path d="M1.3 2.8 V1.9 C1.3 0.7 3.5 0.7 3.5 1.9 V2.8" stroke="#4a4a4a" stroke-width="0.45" fill="none"/><rect x="2.5" y="2.9" width="3.6" height="2.5" fill="none" stroke="#4a4a4a" stroke-width="0.45"/></svg>
<svg class="a" style="left:637.5px;top:82px" width="7" height="6" viewBox="0 0 7 6"><path d="M1.3 2.8 V1.9 C1.3 0.7 3.5 0.7 3.5 1.9 V2.8" stroke="#4a4a4a" stroke-width="0.45" fill="none"/><rect x="2.5" y="2.9" width="3.6" height="2.5" fill="none" stroke="#4a4a4a" stroke-width="0.45"/></svg>
<div class="t" style="left:575px;top:92.5px;color:#222">Rotation:</div>
<div class="a" style="left:572px;top:98.8px;width:57.8px;height:23.8px;background:#d0d0d0;border-radius:2px;overflow:hidden"><div class="a" style="left:0;top:7.53px;width:100%;height:0.6px;background:#c0c0c0"></div><div class="a" style="left:0;top:15.47px;width:100%;height:0.6px;background:#c0c0c0"></div></div>
<div class="t" style="left:577.5px;top:101.3px;color:#222">X</div><div class="t" style="right:175.2px;top:101.3px;color:#222">0°</div>
<div class="t" style="left:577.5px;top:109.2px;color:#222">Y</div><div class="t" style="right:175.2px;top:109.2px;color:#222">0°</div>
<div class="t" style="left:577.5px;top:117.1px;color:#222">Z</div><div class="t" style="right:175.2px;top:117.1px;color:#222">0°</div>
<svg class="a" style="left:637.5px;top:100px" width="7" height="6" viewBox="0 0 7 6"><path d="M1.3 2.8 V1.9 C1.3 0.7 3.5 0.7 3.5 1.9 V2.8" stroke="#4a4a4a" stroke-width="0.45" fill="none"/><rect x="2.5" y="2.9" width="3.6" height="2.5" fill="none" stroke="#4a4a4a" stroke-width="0.45"/></svg>
<svg class="a" style="left:637.5px;top:108px" width="7" height="6" viewBox="0 0 7 6"><path d="M1.3 2.8 V1.9 C1.3 0.7 3.5 0.7 3.5 1.9 V2.8" stroke="#4a4a4a" stroke-width="0.45" fill="none"/><rect x="2.5" y="2.9" width="3.6" height="2.5" fill="none" stroke="#4a4a4a" stroke-width="0.45"/></svg>
<svg class="a" style="left:637.5px;top:116px" width="7" height="6" viewBox="0 0 7 6"><path d="M1.3 2.8 V1.9 C1.3 0.7 3.5 0.7 3.5 1.9 V2.8" stroke="#4a4a4a" stroke-width="0.45" fill="none"/><rect x="2.5" y="2.9" width="3.6" height="2.5" fill="none" stroke="#4a4a4a" stroke-width="0.45"/></svg>
<div class="a dk" style="left:572px;top:124.3px;width:75.8px;height:7.9px;background:#2e2e2e"></div>
<div class="t" style="left:575px;top:126.7px;color:#e6e6e6">XYZ Euler</div>
<svg class="a" style="left:642px;top:125.8px" width="5" height="5" viewBox="0 0 5 5"><path d="M0.60 1.50 L2.20 3.20 L3.80 1.50" stroke="#ccc" stroke-width="0.6" fill="none"/></svg>
<div class="t" style="left:575px;top:136.5px;color:#222">Scale:</div>
<div class="a" style="left:572px;top:142px;width:57.8px;height:23.5px;background:#d0d0d0;border-radius:2px;overflow:hidden"><div class="a" style="left:0;top:7.43px;width:100%;height:0.6px;background:#c0c0c0"></div><div class="a" style="left:0;top:15.27px;width:100%;height:0.6px;background:#c0c0c0"></div></div>
<div class="t" style="left:577.5px;top:144.4px;color:#222">X</div><div class="t" style="right:175.2px;top:144.4px;color:#222">0.020</div>
<div class="t" style="left:577.5px;top:152.2px;color:#222">Y</div><div class="t" style="right:175.2px;top:152.2px;color:#222">0.020</div>
<div class="t" style="left:577.5px;top:160.1px;color:#222">Z</div><div class="t" style="right:175.2px;top:160.1px;color:#222">0.050</div>
<svg class="a" style="left:637.5px;top:143.2px" width="7" height="6" viewBox="0 0 7 6"><path d="M1.3 2.8 V1.9 C1.3 0.7 3.5 0.7 3.5 1.9 V2.8" stroke="#4a4a4a" stroke-width="0.45" fill="none"/><rect x="2.5" y="2.9" width="3.6" height="2.5" fill="none" stroke="#4a4a4a" stroke-width="0.45"/></svg>
<svg class="a" style="left:637.5px;top:151px" width="7" height="6" viewBox="0 0 7 6"><path d="M1.3 2.8 V1.9 C1.3 0.7 3.5 0.7 3.5 1.9 V2.8" stroke="#4a4a4a" stroke-width="0.45" fill="none"/><rect x="2.5" y="2.9" width="3.6" height="2.5" fill="none" stroke="#4a4a4a" stroke-width="0.45"/></svg>
<svg class="a" style="left:637.5px;top:158.8px" width="7" height="6" viewBox="0 0 7 6"><path d="M1.3 2.8 V1.9 C1.3 0.7 3.5 0.7 3.5 1.9 V2.8" stroke="#4a4a4a" stroke-width="0.45" fill="none"/><rect x="2.5" y="2.9" width="3.6" height="2.5" fill="none" stroke="#4a4a4a" stroke-width="0.45"/></svg>
<div class="t" style="left:575px;top:170.5px;color:#222">Dimensions:</div>
<div class="a" style="left:572px;top:176px;width:75.8px;height:24.0px;background:#d0d0d0;border-radius:2px;overflow:hidden"><div class="a" style="left:0;top:7.60px;width:100%;height:0.6px;background:#c0c0c0"></div><div class="a" style="left:0;top:15.60px;width:100%;height:0.6px;background:#c0c0c0"></div></div>
<div class="t" style="left:577.5px;top:178.5px;color:#222">X</div><div class="t" style="right:157.2px;top:178.5px;color:#222">0.04 m</div>
<div class="t" style="left:577.5px;top:186.5px;color:#222">Y</div><div class="t" style="right:157.2px;top:186.5px;color:#222">0.04 m</div>
<div class="t" style="left:577.5px;top:194.5px;color:#222">Z</div><div class="t" style="right:157.2px;top:194.5px;color:#222">0.1 m</div>
<div class="a" style="left:568.5px;top:203.8px;width:82.5px;height:10.4px;background:#b3b3b3;border-top:0.6px solid #a3a3a3"></div>
<svg class="a" style="left:571.8px;top:207px" width="4" height="4" viewBox="0 0 4 4"><path d="M0.8 0.3 V3.5 L3.2 1.9 Z" fill="#333"/></svg>
<div class="t" style="left:578px;top:207.5px;color:#333;letter-spacing:0.12px">Properties</div>
<div class="a" style="left:651px;top:41.5px;width:8px;height:165.5px;background:#777"></div>
<div class="a" style="left:651.6px;top:44.8px;width:6.6px;height:14.0px;background:#bcbcbc;border-radius:0 1.5px 1.5px 0"></div>
<svg class="a" style="left:651px;top:32.10px" width="8" height="40" viewBox="0 0 8 40"><text x="0" y="0" transform="translate(6.3 20) rotate(-90)" text-anchor="middle" font-family="Liberation Sans" font-size="4.7" fill="#1e1e1e">Item</text></svg>
<div class="a" style="left:651.6px;top:60.2px;width:6.6px;height:10.7px;background:#a3a3a3;border-radius:0 1.5px 1.5px 0"></div>
<svg class="a" style="left:651px;top:45.85px" width="8" height="40" viewBox="0 0 8 40"><text x="0" y="0" transform="translate(6.3 20) rotate(-90)" text-anchor="middle" font-family="Liberation Sans" font-size="4.7" fill="#1e1e1e">Tool</text></svg>
<div class="a" style="left:651.6px;top:72.2px;width:6.6px;height:16.5px;background:#a3a3a3;border-radius:0 1.5px 1.5px 0"></div>
<svg class="a" style="left:651px;top:60.75px" width="8" height="40" viewBox="0 0 8 40"><text x="0" y="0" transform="translate(6.3 20) rotate(-90)" text-anchor="middle" font-family="Liberation Sans" font-size="4.7" fill="#1e1e1e">View</text></svg>
<div class="a" style="left:651.6px;top:90px;width:6.6px;height:13.2px;background:#a3a3a3;border-radius:0 1.5px 1.5px 0"></div>
<svg class="a" style="left:651px;top:76.90px" width="8" height="40" viewBox="0 0 8 40"><text x="0" y="0" transform="translate(6.3 20) rotate(-90)" text-anchor="middle" font-family="Liberation Sans" font-size="4.7" fill="#1e1e1e">Edit</text></svg>
<div class="a" style="left:651.6px;top:104.4px;width:6.6px;height:25.2px;background:#a3a3a3;border-radius:0 1.5px 1.5px 0"></div>
<svg class="a" style="left:651px;top:97.30px" width="8" height="40" viewBox="0 0 8 40"><text x="0" y="0" transform="translate(6.3 20) rotate(-90)" text-anchor="middle" font-family="Liberation Sans" font-size="4.7" fill="#1e1e1e">Animate</text></svg>
<div class="a" style="left:651.6px;top:131px;width:6.6px;height:18.7px;background:#a3a3a3;border-radius:0 1.5px 1.5px 0"></div>
<svg class="a" style="left:651px;top:120.65px" width="8" height="40" viewBox="0 0 8 40"><text x="0" y="0" transform="translate(6.3 20) rotate(-90)" text-anchor="middle" font-family="Liberation Sans" font-size="4.7" fill="#1e1e1e">HardOps</text></svg>
<div class="a" style="left:651.6px;top:151px;width:6.6px;height:31.6px;background:#a3a3a3;border-radius:0 1.5px 1.5px 0"></div>
<svg class="a" style="left:651px;top:147.10px" width="8" height="40" viewBox="0 0 8 40"><text x="0" y="0" transform="translate(6.3 20) rotate(-90)" text-anchor="middle" font-family="Liberation Sans" font-size="4.7" fill="#1e1e1e">BoxCutter</text></svg>
<div class="a" style="left:651.6px;top:184px;width:6.6px;height:21.2px;background:#a3a3a3;border-radius:0 1.5px 1.5px 0"></div>
<svg class="a" style="left:651px;top:174.90px" width="8" height="40" viewBox="0 0 8 40"><text x="0" y="0" transform="translate(6.3 20) rotate(-90)" text-anchor="middle" font-family="Liberation Sans" font-size="4.7" fill="#1e1e1e">3D Print</text></svg>

<!-- OUTLINER -->
<div class="a" style="left:661px;top:40.2px;width:138px;height:8.3px;background:#a4a4a4"></div>
<div class="a" style="left:661px;top:56.8px;width:138px;height:8.3px;background:#a4a4a4"></div>
<div class="a" style="left:661px;top:73.5px;width:138px;height:8.4px;background:#a4a4a4"></div>
<div class="a dk" style="left:664.3px;top:22.3px;width:12.7px;height:7.5px;background:#3a3a3a"></div>
<svg class="a" style="left:664.3px;top:22.3px" width="13" height="7.5" viewBox="0 0 13 7.5"><rect x="1.8" y="1.2" width="1.2" height="1.2" fill="#ddd"/><rect x="2.6" y="3.2" width="1" height="1" fill="#ddd"/><rect x="4.2" y="3.1" width="3.2" height="1.1" fill="#ddd"/><rect x="2.6" y="5.2" width="1" height="1" fill="#ddd"/><rect x="4.2" y="5.1" width="3.2" height="1.1" fill="#ddd"/><path d="M8.40 2.50 L9.80 4.00 L11.20 2.50" stroke="#ccc" stroke-width="0.6" fill="none"/></svg>
<div class="a dk" style="left:680px;top:22.3px;width:12.7px;height:7.5px;background:#5a5a5a"></div>
<svg class="a" style="left:680px;top:22.3px" width="13" height="7.5" viewBox="0 0 13 7.5"><rect x="1.5" y="1.4" width="5" height="4.6" rx="0.8" fill="none" stroke="#ccc" stroke-width="0.6"/><circle cx="3.8" cy="3.6" r="1.3" fill="#ccc"/><path d="M8.40 2.50 L9.80 4.00 L11.20 2.50" stroke="#ccc" stroke-width="0.6" fill="none"/></svg>
<div class="a dk" style="left:702.6px;top:22.3px;width:45.2px;height:7.5px;background:#2c2c2c;border-radius:2px"></div>
<svg class="a" style="left:704.5px;top:23px" width="6" height="6" viewBox="0 0 6 6"><circle cx="3.6" cy="2.4" r="1.6" fill="none" stroke="#ddd" stroke-width="0.6"/><path d="M2.4 3.6 L0.6 5.4" stroke="#ddd" stroke-width="0.7"/></svg>
<div class="a dk" style="left:772px;top:22.3px;width:12.9px;height:7.5px;background:#3a3a3a"></div>
<svg class="a" style="left:772px;top:22.3px" width="13" height="7.5" viewBox="0 0 13 7.5"><path d="M1.5 1.4 H6.5 L4.6 3.8 V6.2 L3.4 5.6 V3.8 Z" fill="none" stroke="#ddd" stroke-width="0.5"/><path d="M8.40 2.50 L9.80 4.00 L11.20 2.50" stroke="#ccc" stroke-width="0.6" fill="none"/></svg>
<div class="a" style="left:787.8px;top:22.3px;width:7.8px;height:7.5px;background:#d0d0d0;border-radius:1.5px"></div>
<svg class="a" style="left:787.8px;top:22.3px" width="8" height="7.5" viewBox="0 0 8 7.5"><rect x="1.8" y="2.6" width="3.6" height="3.6" fill="none" stroke="#444" stroke-width="0.5"/><circle cx="5.6" cy="2" r="1.2" fill="#222"/></svg>

<div class="a" style="left:670px;top:32.4px;width:6.6px;height:6.6px;background:#8f8f8f;border-radius:1px"></div>
<svg class="a" style="left:670px;top:32.4px" width="7" height="7" viewBox="0 0 7 7"><path d="M1.5 1.5 L5.1 5.1 M5.1 1.5 L1.5 5.1" stroke="#bdbdbd" stroke-width="0.5"/></svg>
<div class="t" style="left:679px;top:36.3px;color:#222">Scene Collection</div>
<svg class="a" style="left:671.5px;top:42px" width="4" height="4" viewBox="0 0 4 4"><path d="M0.3 1 H3.5 L1.9 3.2 Z" fill="#111"/></svg>
<div class="a" style="left:679.6px;top:42px;width:4.2px;height:4.2px;background:#2a2a2a;border-radius:0.7px"></div>
<svg class="a" style="left:680.2px;top:42.5px" width="3" height="3" viewBox="0 0 3 3"><path d="M0.5 1.5 L1.2 2.2 L2.5 0.6" stroke="#ddd" stroke-width="0.5" fill="none"/></svg>
<div class="a" style="left:686px;top:41px;width:7.4px;height:7.4px;background:#8f8f8f;border-radius:1px"></div>
<svg class="a" style="left:686px;top:40.5px" width="7" height="7" viewBox="0 0 7 7"><rect x="1.4" y="1.4" width="3.8" height="3.8" fill="none" stroke="#c0c0c0" stroke-width="0.5"/></svg>
<div class="t" style="left:696px;top:44.3px;color:#222">Reference</div>
<div class="a" style="left:681.4px;top:46px;width:0.5px;height:6.5px;background:#555"></div>
<div class="a" style="left:680.6px;top:50.7px;width:1.8px;height:1.8px;background:#111;border-radius:50%"></div>
<div class="a" style="left:686px;top:49.2px;width:7.4px;height:7.4px;background:#808080;border-radius:1px"></div>
<svg class="a" style="left:686.2px;top:49.4px" width="7" height="7" viewBox="0 0 7 7"><path d="M1.2 1.4 H5.8 L3.5 5.8 Z" fill="#f29a40" stroke="#f29a40" stroke-width="0.6" stroke-linejoin="round"/><rect x="2.9" y="2.3" width="1.2" height="1.2" fill="#7a5a3a"/></svg>
<div class="t" style="left:696px;top:52.4px;color:#222">Cylinder</div>
<svg class="a" style="left:722px;top:48.4px" width="8" height="7" viewBox="0 0 8 7"><path d="M1 1.2 L7 1.2 L4 6.4 Z" fill="none" stroke="#1f9b7a" stroke-width="1.5"/><circle cx="1" cy="1.2" r="1" fill="#1f9b7a"/><circle cx="7" cy="1.2" r="1" fill="#1f9b7a"/><circle cx="4" cy="6.2" r="1" fill="#1f9b7a"/></svg>
<svg class="a" style="left:788px;top:41.5px" width="7" height="5" viewBox="0 0 7 5"><path d="M0.6 2.5 C2 0.6 5 0.6 6.4 2.5 C5 4.4 2 4.4 0.6 2.5 Z" fill="none" stroke="#222" stroke-width="0.6"/><circle cx="3.5" cy="2.5" r="1" fill="#222"/></svg>
<svg class="a" style="left:788px;top:49.6px" width="7" height="5" viewBox="0 0 7 5"><path d="M0.6 2.5 C2 0.6 5 0.6 6.4 2.5 C5 4.4 2 4.4 0.6 2.5 Z" fill="none" stroke="#222" stroke-width="0.6"/><circle cx="3.5" cy="2.5" r="1" fill="#222"/></svg>

<!-- PROPERTIES -->
<div class="a dk" style="left:664.3px;top:93.8px;width:12.7px;height:7.9px;background:#3a3a3a"></div>
<svg class="a" style="left:664.3px;top:93.8px" width="13" height="8" viewBox="0 0 13 8"><rect x="1.5" y="1.3" width="5.4" height="2.3" rx="0.4" fill="#ddd"/><rect x="1.5" y="4.4" width="5.4" height="2.3" rx="0.4" fill="#ddd"/><rect x="2.2" y="1.8" width="1.2" height="1.2" fill="#3a3a3a"/><rect x="5" y="4.9" width="1.2" height="1.2" fill="#3a3a3a"/><path d="M8.40 2.70 L9.80 4.20 L11.20 2.70" stroke="#ccc" stroke-width="0.6" fill="none"/></svg>
<svg class="a" style="left:682.5px;top:94.5px" width="8" height="7" viewBox="0 0 8 7"><path d="M1 6.2 L1.5 3 L2.8 1.2 L3.6 3.2 L4.6 4.4 L4.2 6.2 Z" fill="#222"/><circle cx="5" cy="4.7" r="1.4" fill="none" stroke="#222" stroke-width="0.6"/><rect x="4.6" y="0.8" width="1" height="1" fill="#222"/></svg>
<div class="t" style="left:693px;top:96.9px;color:#222">Scene</div>
<svg class="a" style="left:789px;top:94.5px" width="7" height="7" viewBox="0 0 7 7"><path d="M1 6 L3 4 M2.4 2.4 L4.6 4.6 M3.5 1.3 L5.7 3.5 M3.5 1.3 L2.8 3 M5.7 3.5 L4 4.2" stroke="#777" stroke-width="0.6" fill="none"/></svg>

<!-- properties tabs -->
<div class="a" style="left:661.2px;top:103.3px;width:10.8px;height:176px;background:#7d7d7d"></div>
<div class="a" style="left:661.2px;top:119px;width:10.8px;height:2.4px;background:#6e6e6e"></div>
<div class="a" style="left:661.2px;top:176.5px;width:10.8px;height:1.8px;background:#6e6e6e"></div>
<div class="a" style="left:661.2px;top:265px;width:10.8px;height:1.8px;background:#6e6e6e"></div>
<div class="a" style="left:661.2px;top:156.8px;width:11px;height:10.8px;background:#b5b5b5"></div>
<svg class="a" style="left:661.2px;top:103.3px" width="11" height="176" viewBox="661.2 103.3 11 176">
<!-- tool -->
<path d="M668.2 110.2 L668.2 114.6 M666.2 107.4 L668.2 110.4 L670.2 107.4" stroke="#e8e8e8" stroke-width="1" fill="none"/><rect x="664" y="112.2" width="2.2" height="2.4" fill="#e8e8e8"/>
<!-- render -->
<rect x="664" y="124.6" width="6" height="4.6" fill="none" stroke="#e0e0e0" stroke-width="0.6"/><rect x="665" y="123.6" width="2" height="1.2" fill="#e0e0e0"/>
<!-- output -->
<path d="M664 136 H670 V139.5 H664 Z M665 139.5 L666 142 H668 L669 139.5" fill="none" stroke="#e0e0e0" stroke-width="0.6"/>
<!-- view layer -->
<rect x="664" y="147.6" width="6" height="5" fill="none" stroke="#ddd" stroke-width="0.6"/><path d="M664.6 152 L666.4 149.6 L668 151 L669.4 150 V152 Z" fill="#ddd"/>
<!-- scene -->
<path d="M663.8 165.4 L665.2 159.4 L667.2 162 L666.6 165.4 Z" fill="#f2f2f2" stroke="#444" stroke-width="0.4"/><circle cx="668.2" cy="164" r="1.7" fill="#e8e8e8" stroke="#444" stroke-width="0.45"/><rect x="667.6" y="159.2" width="1.4" height="1.4" fill="#333"/>
<!-- world -->
<circle cx="666.8" cy="173.5" r="3" fill="#b84050"/><path d="M665 171.8 L666.6 173 L665.6 175.2 M668.6 171.6 L667.6 173.4 L669.4 174.8" stroke="#e07a88" stroke-width="0.7" fill="none"/>
<!-- object -->
<rect x="664.6" y="185.8" width="4.4" height="4.4" fill="#f08c24"/><path d="M663.8 185 L665 186.2 M669.8 185 L668.6 186.2 M663.8 191 L665 189.8 M669.8 191 L668.6 189.8" stroke="#c9732a" stroke-width="0.6"/>
<!-- modifiers -->
<path d="M664.4 203.6 L667.6 200.4 M667 198.6 C667.6 197 670 197 670.2 198.6 L668.8 199.6 L669.4 200.4 L670.6 199.6 C670.6 201.6 669 202 668 201.2" stroke="#6fa0e8" stroke-width="0.9" fill="#6fa0e8"/>
<!-- particles -->
<path d="M664.6 208.4 L667.2 211.2 L669.6 208.6 M667.2 211.2 L669.6 213.6 M667.2 211.2 L664.8 214" stroke="#6fa0e8" stroke-width="0.6" fill="none"/><circle cx="664.6" cy="208.4" r="0.9" fill="#6fa0e8"/><circle cx="669.6" cy="213.6" r="0.9" fill="#6fa0e8"/>
<!-- physics -->
<circle cx="666.8" cy="224" r="2.8" fill="none" stroke="#6fa0e8" stroke-width="0.6"/><rect x="665.6" y="222.8" width="2.4" height="2.4" fill="#a8c6f2"/>
<!-- constraints -->
<circle cx="666" cy="236" r="2.2" fill="none" stroke="#6fa0e8" stroke-width="0.7"/><circle cx="667.8" cy="234.4" r="2.2" fill="none" stroke="#6fa0e8" stroke-width="0.7"/><circle cx="666" cy="236" r="0.8" fill="#a8c6f2"/>
<!-- data -->
<path d="M664 244.6 H669.6 L666.8 249.6 Z" fill="none" stroke="#1fa060" stroke-width="1.1"/><circle cx="666.8" cy="246.2" r="0.8" fill="#1fa060"/>
<!-- material -->
<circle cx="666.8" cy="258.4" r="2.9" fill="#c04050"/><path d="M666.8 255.5 A2.9 2.9 0 0 1 669.7 258.4 L666.8 258.4 Z M666.8 258.4 L663.9 258.4 A2.9 2.9 0 0 0 666.8 261.3 Z" fill="#e8a0a8"/>
<!-- texture -->
<rect x="663.8" y="270.6" width="6" height="6" fill="#e8a0a8"/><rect x="663.8" y="270.6" width="1.5" height="1.5" fill="#b83848"/><rect x="663.8" y="273.6" width="1.5" height="1.5" fill="#b83848"/><rect x="665.3" y="272.1" width="1.5" height="1.5" fill="#b83848"/><rect x="665.3" y="275.1" width="1.5" height="1.5" fill="#b83848"/><rect x="666.8" y="270.6" width="1.5" height="1.5" fill="#b83848"/><rect x="666.8" y="273.6" width="1.5" height="1.5" fill="#b83848"/><rect x="668.3" y="272.1" width="1.5" height="1.5" fill="#b83848"/><rect x="668.3" y="275.1" width="1.5" height="1.5" fill="#b83848"/>
</svg>

<!-- scene panel -->
<div class="a" style="left:673px;top:103px;width:124.5px;height:45.5px;background:#acacac;border-radius:0 0 2px 2px"></div>
<div class="a" style="left:673px;top:103px;width:124.5px;height:9.8px;background:#b5b5b5"></div>
<svg class="a" style="left:675.8px;top:106.5px" width="4" height="4" viewBox="0 0 4 4"><path d="M0.3 0.8 H3.5 L1.9 3.2 Z" fill="#333"/></svg>
<div class="t" style="left:682px;top:107.5px;color:#222">Scene</div>
<div class="a" style="left:783px;top:108px;width:10px;height:0.5px;background:#a6a6a6"></div>
<div class="t" style="right:67.4px;top:119.5px;color:#222">Camera</div>
<div class="t" style="right:67.4px;top:130px;color:#222">Background Scene</div>
<div class="t" style="right:67.4px;top:140.4px;color:#222">Active Clip</div>
<div class="a dk" style="left:735.9px;top:117.5px;width:58.8px;height:7.1px;background:#2a2a2a"></div>
<div class="a dk" style="left:735.9px;top:127.3px;width:58.8px;height:7.4px;background:#2a2a2a"></div>
<div class="a dk" style="left:735.9px;top:137.8px;width:58.8px;height:7.5px;background:#2a2a2a"></div>
<svg class="a" style="left:736.5px;top:117.8px" width="7" height="7" viewBox="0 0 7 7"><rect x="1.6" y="1.4" width="3.8" height="3.8" fill="#ddd"/><path d="M0.8 0.6 H1.8 M0.8 0.6 V1.6 M6.2 0.6 H5.2 M6.2 0.6 V1.6 M0.8 6 H1.8 M0.8 6 V5 M6.2 6 H5.2 M6.2 6 V5" stroke="#bbb" stroke-width="0.4"/></svg>
<svg class="a" style="left:788px;top:118px" width="6" height="6" viewBox="0 0 6 6"><path d="M0.8 5.2 L3.4 2.6 M3 1.6 L4.4 0.6 L5.4 1.6 L4.4 3 Z" stroke="#ddd" stroke-width="0.7" fill="#ddd"/></svg>
<svg class="a" style="left:736.5px;top:127.6px" width="7" height="7" viewBox="0 0 7 7"><path d="M1 6.2 L1.5 3 L2.8 1.2 L3.6 3.2 L4.6 4.4 L4.2 6.2 Z" fill="#eee"/><circle cx="5" cy="4.7" r="1.4" fill="none" stroke="#eee" stroke-width="0.6"/></svg>
<svg class="a" style="left:736.5px;top:138.2px" width="7" height="7" viewBox="0 0 7 7"><rect x="1.2" y="3" width="4.8" height="3" fill="#eee"/><path d="M1.2 2.4 L5.6 1 L5.8 1.8 L1.4 3.2 Z" fill="#eee"/></svg>

<!-- collapsed panels -->
<div class="a" style="left:673px;top:149.4px;width:124.5px;height:60px;background:#b5b5b5"></div>
<div class="a" style="left:673px;top:149.2px;width:124.5px;height:0.5px;background:#afafaf"></div>
<svg class="a" style="left:675.3px;top:152.2px" width="4" height="4" viewBox="0 0 4 4"><path d="M0.8 0.3 V3.5 L3.2 1.9 Z" fill="#333"/></svg>
<div class="t" style="left:681.7px;top:152.7px;color:#222;letter-spacing:0.25px">Units</div>
<div class="a" style="left:784px;top:154.2px;width:8px;height:0.5px;background:#a8a8a8"></div>
<div class="a" style="left:673px;top:159.1px;width:124.5px;height:0.5px;background:#afafaf"></div>
<svg class="a" style="left:675.3px;top:162.1px" width="4" height="4" viewBox="0 0 4 4"><path d="M0.8 0.3 V3.5 L3.2 1.9 Z" fill="#333"/></svg>
<div class="t" style="left:690px;top:162.6px;color:#222;letter-spacing:0.25px">Gravity</div>
<div class="a" style="left:784px;top:164.1px;width:8px;height:0.5px;background:#a8a8a8"></div>
<div class="a" style="left:673px;top:169.2px;width:124.5px;height:0.5px;background:#afafaf"></div>
<svg class="a" style="left:675.3px;top:172.2px" width="4" height="4" viewBox="0 0 4 4"><path d="M0.8 0.3 V3.5 L3.2 1.9 Z" fill="#333"/></svg>
<div class="t" style="left:681.7px;top:172.7px;color:#222;letter-spacing:0.25px">Keying Sets</div>
<div class="a" style="left:784px;top:174.2px;width:8px;height:0.5px;background:#a8a8a8"></div>
<div class="a" style="left:673px;top:179.2px;width:124.5px;height:0.5px;background:#afafaf"></div>
<svg class="a" style="left:675.3px;top:182.2px" width="4" height="4" viewBox="0 0 4 4"><path d="M0.8 0.3 V3.5 L3.2 1.9 Z" fill="#333"/></svg>
<div class="t" style="left:681.7px;top:182.7px;color:#222;letter-spacing:0.25px">Audio</div>
<div class="a" style="left:784px;top:184.2px;width:8px;height:0.5px;background:#a8a8a8"></div>
<div class="a" style="left:673px;top:189.1px;width:124.5px;height:0.5px;background:#afafaf"></div>
<svg class="a" style="left:675.3px;top:192.1px" width="4" height="4" viewBox="0 0 4 4"><path d="M0.8 0.3 V3.5 L3.2 1.9 Z" fill="#333"/></svg>
<div class="t" style="left:681.7px;top:192.6px;color:#222;letter-spacing:0.25px">Rigid Body World</div>
<div class="a" style="left:784px;top:194.1px;width:8px;height:0.5px;background:#a8a8a8"></div>
<div class="a" style="left:673px;top:199.2px;width:124.5px;height:0.5px;background:#afafaf"></div>
<svg class="a" style="left:675.3px;top:202.2px" width="4" height="4" viewBox="0 0 4 4"><path d="M0.8 0.3 V3.5 L3.2 1.9 Z" fill="#333"/></svg>
<div class="t" style="left:681.7px;top:202.7px;color:#222;letter-spacing:0.25px">Custom Properties</div>
<div class="a" style="left:784px;top:204.2px;width:8px;height:0.5px;background:#a8a8a8"></div>
<div class="a" style="left:682px;top:161.3px;width:5.7px;height:5.7px;background:#5680c2;border-radius:1px"></div>
<svg class="a" style="left:682px;top:161.3px" width="6" height="6" viewBox="0 0 6 6"><path d="M1.2 3 L2.5 4.3 L4.8 1.6" stroke="#fff" stroke-width="0.7" fill="none"/></svg>

<!-- STATUS BAR -->
<svg class="a" style="left:4.5px;top:425.2px" width="5" height="7" viewBox="0 0 5 7"><rect x="0.6" y="0.6" width="3.6" height="5.6" rx="1.6" fill="none" stroke="#222" stroke-width="0.55"/><rect x="1.1" y="1.1" width="1.2" height="2" fill="#222"/></svg>
<div class="t" style="left:14.3px;top:428px;color:#222">Select</div>
<svg class="a" style="left:31px;top:425.2px" width="8" height="7" viewBox="0 0 8 7"><rect x="0.6" y="0.6" width="3.6" height="5.6" rx="1.6" fill="none" stroke="#222" stroke-width="0.55"/><rect x="1.1" y="1.1" width="1.2" height="2" fill="#222"/><path d="M5 1 H7 V3" stroke="#222" stroke-width="0.5" fill="none"/></svg>
<div class="t" style="left:41.5px;top:428px;color:#222">Box Select</div>
<svg class="a" style="left:102.5px;top:425.2px" width="5" height="7" viewBox="0 0 5 7"><rect x="0.6" y="0.6" width="3.6" height="5.6" rx="1.6" fill="none" stroke="#222" stroke-width="0.55"/><rect x="1.9" y="1.1" width="1" height="2.2" fill="#222"/></svg>
<div class="t" style="left:112px;top:428px;color:#222">Rotate View</div>
<svg class="a" style="left:201px;top:425.2px" width="5" height="7" viewBox="0 0 5 7"><rect x="0.6" y="0.6" width="3.6" height="5.6" rx="1.6" fill="none" stroke="#222" stroke-width="0.55"/><rect x="2.5" y="1.1" width="1.2" height="2" fill="#222"/></svg>
<div class="t" style="left:210px;top:428px;color:#222">Object Context Menu</div>
<div class="t" style="right:13px;top:428px;color:#222;letter-spacing:0.06px">Reference | Cylinder | Verts:64 | Faces:34 | Tris:124 | Objects:0/1 | Mem: 34.7 MiB | v2.82.7</div>
</body></html>
